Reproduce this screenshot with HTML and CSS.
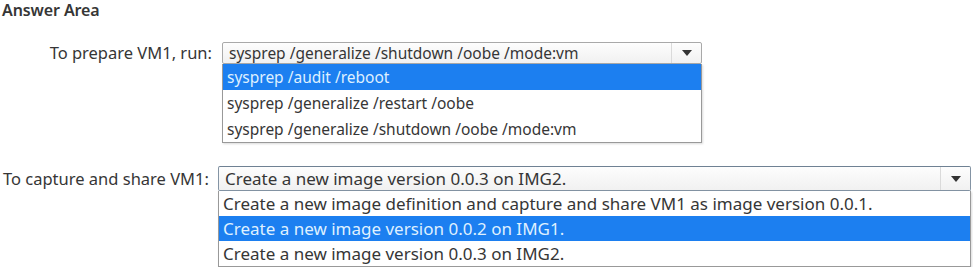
FILE: index.html
```html
<!DOCTYPE html>
<html lang="en">
<head>
  <meta charset="UTF-8">
  <title>Answer Area</title>
  <link rel="stylesheet" href="styles.css">
</head>
<body>
  <h2 class="title">Answer Area</h2>

  <!-- Prepare VM1 -->
  <div class="row row-prepare">
    <span class="label">To prepare VM1, run:</span>
    <div class="dropdown dropdown-small">
      <div class="select">
        <span class="value">sysprep /generalize /shutdown /oobe /mode:vm</span>
        <span class="arrow"></span>
      </div>
      <ul class="options">
        <li class="selected">sysprep /audit /reboot</li>
        <li>sysprep /generalize /restart /oobe</li>
        <li>sysprep /generalize /shutdown /oobe /mode:vm</li>
      </ul>
    </div>
  </div>

  <!-- Capture and share VM1 -->
  <div class="row row-capture">
    <span class="label">To capture and share VM1:</span>
    <div class="dropdown dropdown-wide">
      <div class="select">
        <span class="value">Create a new image version 0.0.3 on IMG2.</span>
        <span class="arrow"></span>
      </div>
      <ul class="options">
        <li>Create a new image definition and capture and share VM1 as image version 0.0.1.</li>
        <li class="selected">Create a new image version 0.0.2 on IMG1.</li>
        <li>Create a new image version 0.0.3 on IMG2.</li>
      </ul>
    </div>
  </div>
</body>
</html>
```

FILE: styles.css
```css
:root {
  --text: #363636;
  --border: #a9a9a9;
  --blue: #1c7ff0;
}

body {
  font-family: 'Noto Sans', 'Open Sans', sans-serif;
  color: var(--text);
  background-color: white;
  margin: 0;
  padding: 0;
}

.title {
  font-size: 16px;
  font-weight: 600;
  margin: 0;
  padding: 0 0 0 2px;
  line-height: 20px;
  letter-spacing: -0.1px;
}

.row {
  display: flex;
  align-items: flex-start;
}

.row-prepare {
  margin-top: 22px;
}

.row-capture {
  margin-top: 23px;
}

.label {
  font-size: 16.5px;
  line-height: 21px;
  white-space: nowrap;
  flex-shrink: 0;
}

.row-prepare .label {
  width: 212px;
  margin-right: 10px;
  text-align: right;
}

.row-capture .label {
  width: 215px;
  padding-left: 3px;
  line-height: 25px;
}

.dropdown {
  display: flex;
  flex-direction: column;
}

.dropdown-small {
  width: 480px;
}

.dropdown-wide {
  width: 753px;
}

.select {
  display: flex;
  align-items: stretch;
  border: 1px solid var(--border);
  border-radius: 2px;
  background: linear-gradient(#fdfdfd, #f1f1f1);
}

.dropdown-small .select {
  height: 20px;
}

.dropdown-wide .select {
  height: 23px;
  border-color: #8494a4;
  border-top-color: #6f8193;
}

.value {
  flex: 1;
  padding-left: 6px;
  white-space: nowrap;
  overflow: hidden;
  display: flex;
  align-items: center;
}

.dropdown-small .value,
.dropdown-small .options li {
  font-size: 15.5px;
}

.dropdown-wide .value,
.dropdown-wide .options li {
  font-size: 17px;
}

.arrow {
  width: 29px;
  border-left: 1px solid #dadada;
  display: flex;
  align-items: center;
  justify-content: center;
}

.arrow::after {
  content: '';
  border-left: 5px solid transparent;
  border-right: 5px solid transparent;
  border-top: 6px solid #333;
}

.options {
  list-style: none;
  margin: 0;
  padding: 0;
  border: 1px solid #999;
  border-top: none;
  background-color: white;
  box-shadow: 1px 1px 2px rgba(0, 0, 0, 0.15);
}

.options li {
  padding-left: 4px;
  white-space: nowrap;
}

.dropdown-small .options li {
  line-height: 26px;
}

.dropdown-wide .options li {
  line-height: 25px;
}

.options li.selected {
  background-color: var(--blue);
  color: #dff0ff;
}
```
